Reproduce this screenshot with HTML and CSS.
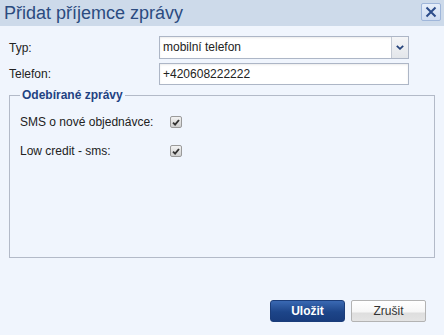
FILE: index.html
```html
<!DOCTYPE html>
<html lang="cs">
<head>
<meta charset="utf-8">
<title>Přidat příjemce zprávy</title>
<link rel="stylesheet" href="styles.css">
</head>
<body>
<div class="dialog">
  <div class="titlebar">
    <span class="title">Přidat příjemce zprávy</span>
    <span class="close" title="Zavřít">
      <svg width="12" height="12" viewBox="0 0 12 12"><path d="M1.5 1.5 L10.5 10.5 M10.5 1.5 L1.5 10.5" stroke="#2c4c8a" stroke-width="2" fill="none"/></svg>
    </span>
  </div>
  <div class="body">
    <div class="form-grid">
      <label class="lbl">Typ:</label>
      <div class="select">
        <span class="select-text">mobilní telefon</span>
        <span class="select-btn">
          <svg width="8" height="5" viewBox="0 0 8 5"><path d="M0.8 0.8 L4 3.8 L7.2 0.8" stroke="#24427a" stroke-width="1.8" fill="none"/></svg>
        </span>
      </div>
      <label class="lbl">Telefon:</label>
      <div class="input">+420608222222</div>
    </div>
    <fieldset class="group">
      <legend>Odebírané zprávy</legend>
      <div class="check-grid">
        <span class="lbl">SMS o nové objednávce:</span>
        <span class="cb"><svg width="8" height="7" viewBox="0 0 8 7"><path d="M1 3.6 L3.1 5.6 L7 1" stroke="#333" stroke-width="1.9" fill="none"/></svg></span>
        <span class="lbl">Low credit - sms:</span>
        <span class="cb"><svg width="8" height="7" viewBox="0 0 8 7"><path d="M1 3.6 L3.1 5.6 L7 1" stroke="#333" stroke-width="1.9" fill="none"/></svg></span>
      </div>
    </fieldset>
    <div class="actions">
      <button class="btn btn-primary">Uložit</button>
      <button class="btn btn-secondary">Zrušit</button>
    </div>
  </div>
</div>
</body>
</html>
```

FILE: styles.css
```css
html, body {
  margin: 0;
  padding: 0;
  background: #f0f5fd;
  font-family: "Liberation Sans", Arial, sans-serif;
  font-size: 12px;
  color: #222;
}

.dialog {
  width: 444px;
  height: 335px;
  background: #f0f5fd;
}

.titlebar {
  height: 26px;
  background: #cddaea;
  display: flex;
  align-items: flex-start;
  justify-content: space-between;
  padding: 0 3px 0 4px;
  box-sizing: border-box;
}

.title {
  font-size: 18px;
  line-height: 26px;
  color: #2b4b80;
}

.close {
  margin-top: 3px;
  width: 20px;
  height: 18px;
  box-sizing: border-box;
  border: 1px solid #9fb6da;
  border-radius: 2px;
  background: linear-gradient(#e6eefa, #cfdcf1);
  display: flex;
  align-items: center;
  justify-content: center;
}

.body {
  padding: 10px 9px 0 9px;
}

.form-grid {
  display: grid;
  grid-template-columns: 150px 250px;
  grid-template-rows: 23px 22px;
  row-gap: 4px;
  align-items: center;
}

.lbl {
  line-height: 16px;
  color: #222;
}

.select {
  height: 23px;
  box-sizing: border-box;
  border: 1px solid #adb6c6;
  background: #fff;
  display: flex;
  align-items: stretch;
  box-shadow: inset 0 1px 2px rgba(0, 0, 0, 0.08);
}

.select-text {
  flex: 1;
  padding-left: 3px;
  line-height: 21px;
}

.select-btn {
  width: 16px;
  border-left: 1px solid #c3c9d3;
  background: linear-gradient(#f4f5f7, #e3e6ea);
  display: flex;
  align-items: center;
  justify-content: center;
}

.input {
  height: 22px;
  box-sizing: border-box;
  border: 1px solid #adb6c6;
  background: #fff;
  padding-left: 3px;
  line-height: 20px;
  box-shadow: inset 0 1px 2px rgba(0, 0, 0, 0.08);
}

.group {
  margin: 3px 0 0 0;
  padding: 10px 10px 0 10px;
  border: 1px solid #b3bac8;
  box-sizing: border-box;
  height: 170px;
  min-width: 0;
}

.group legend {
  padding: 0 2px;
  font-weight: bold;
  color: #1f4282;
  line-height: 14px;
}

.check-grid {
  display: grid;
  grid-template-columns: 150px 12px;
  grid-auto-rows: 20px;
  row-gap: 9px;
  align-items: center;
}

.cb {
  width: 12px;
  height: 12px;
  box-sizing: border-box;
  border: 1px solid #9a9a9a;
  border-radius: 2px;
  background: linear-gradient(#f2f2f2, #cfcfcf);
  display: flex;
  align-items: center;
  justify-content: center;
}

.actions {
  display: flex;
  justify-content: flex-end;
  gap: 6px;
  margin-top: 42px;
  padding-right: 9px;
}

.btn {
  width: 75px;
  height: 22px;
  box-sizing: border-box;
  font-family: "Liberation Sans", Arial, sans-serif;
  font-size: 12px;
  padding: 0;
  cursor: pointer;
}

.btn-primary {
  border: 1px solid #1b3d7a;
  border-radius: 3px;
  background: linear-gradient(#3a69b3, #1d4589 55%, #183c7d);
  color: #fff;
  font-weight: bold;
}

.btn-secondary {
  border: 1px solid #b3b3b3;
  border-radius: 2px;
  background: linear-gradient(#ffffff, #f6f6f6 55%, #dedede 60%, #e4e4e4);
  color: #333;
}
```
